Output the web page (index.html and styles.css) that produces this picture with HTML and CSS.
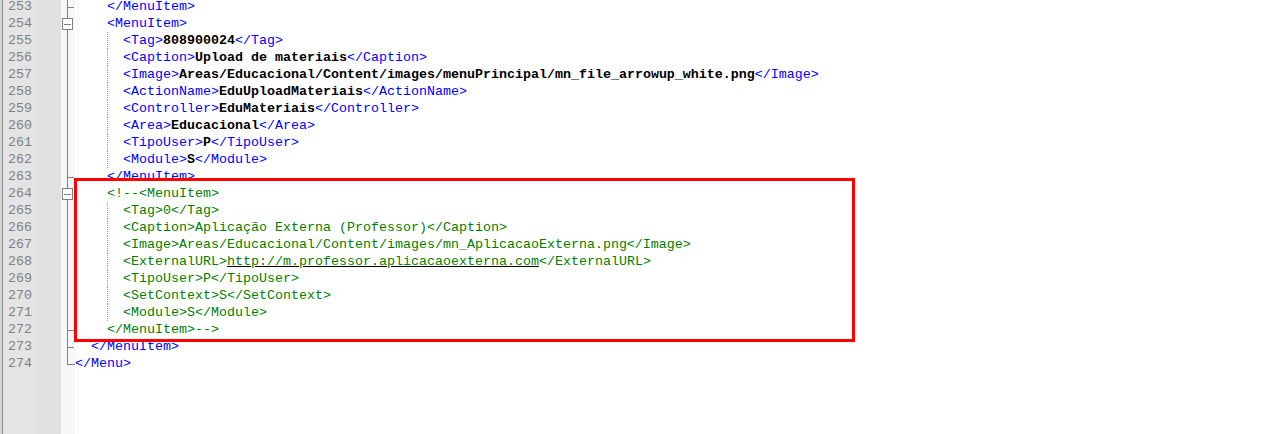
FILE: index.html
```html
<!DOCTYPE html>
<html>
<head>
<meta charset="utf-8">
<link rel="stylesheet" href="styles.css">
</head>
<body>
<div class="window">
  <div class="edge"></div>
  <div class="numbers">
    <div class="rows">
      <div class="n">253</div><div class="n">254</div><div class="n">255</div><div class="n">256</div>
      <div class="n">257</div><div class="n">258</div><div class="n">259</div><div class="n">260</div>
      <div class="n">261</div><div class="n">262</div><div class="n">263</div><div class="n">264</div>
      <div class="n">265</div><div class="n">266</div><div class="n">267</div><div class="n">268</div>
      <div class="n">269</div><div class="n">270</div><div class="n">271</div><div class="n">272</div>
      <div class="n">273</div><div class="n">274</div>
    </div>
  </div>
  <div class="symbols"></div>
  <div class="folds">
    <div class="rows">
      <svg class="f" viewBox="0 0 14 17"><line x1="6.5" y1="0" x2="6.5" y2="17"/><line x1="6.5" y1="9.5" x2="13" y2="9.5"/></svg>
      <svg class="f" viewBox="0 0 14 17"><line x1="6.5" y1="0" x2="6.5" y2="17"/><rect x="1.5" y="3.5" width="10" height="11"/><line x1="3" y1="9.5" x2="10" y2="9.5"/></svg>
      <svg class="f" viewBox="0 0 14 17"><line x1="6.5" y1="0" x2="6.5" y2="17"/></svg>
      <svg class="f" viewBox="0 0 14 17"><line x1="6.5" y1="0" x2="6.5" y2="17"/></svg>
      <svg class="f" viewBox="0 0 14 17"><line x1="6.5" y1="0" x2="6.5" y2="17"/></svg>
      <svg class="f" viewBox="0 0 14 17"><line x1="6.5" y1="0" x2="6.5" y2="17"/></svg>
      <svg class="f" viewBox="0 0 14 17"><line x1="6.5" y1="0" x2="6.5" y2="17"/></svg>
      <svg class="f" viewBox="0 0 14 17"><line x1="6.5" y1="0" x2="6.5" y2="17"/></svg>
      <svg class="f" viewBox="0 0 14 17"><line x1="6.5" y1="0" x2="6.5" y2="17"/></svg>
      <svg class="f" viewBox="0 0 14 17"><line x1="6.5" y1="0" x2="6.5" y2="17"/></svg>
      <svg class="f" viewBox="0 0 14 17"><line x1="6.5" y1="0" x2="6.5" y2="17"/><line x1="6.5" y1="9.5" x2="13" y2="9.5"/></svg>
      <svg class="f" viewBox="0 0 14 17"><line x1="6.5" y1="0" x2="6.5" y2="17"/><rect x="1.5" y="3.5" width="10" height="11"/><line x1="3" y1="9.5" x2="10" y2="9.5"/></svg>
      <svg class="f" viewBox="0 0 14 17"><line x1="6.5" y1="0" x2="6.5" y2="17"/></svg>
      <svg class="f" viewBox="0 0 14 17"><line x1="6.5" y1="0" x2="6.5" y2="17"/></svg>
      <svg class="f" viewBox="0 0 14 17"><line x1="6.5" y1="0" x2="6.5" y2="17"/></svg>
      <svg class="f" viewBox="0 0 14 17"><line x1="6.5" y1="0" x2="6.5" y2="17"/></svg>
      <svg class="f" viewBox="0 0 14 17"><line x1="6.5" y1="0" x2="6.5" y2="17"/></svg>
      <svg class="f" viewBox="0 0 14 17"><line x1="6.5" y1="0" x2="6.5" y2="17"/></svg>
      <svg class="f" viewBox="0 0 14 17"><line x1="6.5" y1="0" x2="6.5" y2="17"/></svg>
      <svg class="f" viewBox="0 0 14 17"><line x1="6.5" y1="0" x2="6.5" y2="17"/><line x1="6.5" y1="9.5" x2="13" y2="9.5"/></svg>
      <svg class="f" viewBox="0 0 14 17"><line x1="6.5" y1="0" x2="6.5" y2="17"/><line x1="6.5" y1="9.5" x2="13" y2="9.5"/></svg>
      <svg class="f" viewBox="0 0 14 17"><line x1="6.5" y1="0" x2="6.5" y2="10"/><line x1="6.5" y1="9.5" x2="14" y2="9.5"/></svg>
    </div>
  </div>
  <div class="code">
    <div class="rows">
<div class="ln"><span class="t">    &lt;/MenuItem&gt;</span></div>
<div class="ln"><span class="t">    &lt;MenuItem&gt;</span></div>
<div class="ln g"><span class="t">      &lt;Tag&gt;</span><b>808900024</b><span class="t">&lt;/Tag&gt;</span></div>
<div class="ln g"><span class="t">      &lt;Caption&gt;</span><b>Upload de materiais</b><span class="t">&lt;/Caption&gt;</span></div>
<div class="ln g"><span class="t">      &lt;Image&gt;</span><b>Areas/Educacional/Content/images/menuPrincipal/mn_file_arrowup_white.png</b><span class="t">&lt;/Image&gt;</span></div>
<div class="ln g"><span class="t">      &lt;ActionName&gt;</span><b>EduUploadMateriais</b><span class="t">&lt;/ActionName&gt;</span></div>
<div class="ln g"><span class="t">      &lt;Controller&gt;</span><b>EduMateriais</b><span class="t">&lt;/Controller&gt;</span></div>
<div class="ln g"><span class="t">      &lt;Area&gt;</span><b>Educacional</b><span class="t">&lt;/Area&gt;</span></div>
<div class="ln g"><span class="t">      &lt;TipoUser&gt;</span><b>P</b><span class="t">&lt;/TipoUser&gt;</span></div>
<div class="ln g"><span class="t">      &lt;Module&gt;</span><b>S</b><span class="t">&lt;/Module&gt;</span></div>
<div class="ln"><span class="t">    &lt;/MenuItem&gt;</span></div>
<div class="ln"><span class="c">    &lt;!--&lt;MenuItem&gt;</span></div>
<div class="ln g"><span class="c">      &lt;Tag&gt;0&lt;/Tag&gt;</span></div>
<div class="ln g"><span class="c">      &lt;Caption&gt;Aplicação Externa (Professor)&lt;/Caption&gt;</span></div>
<div class="ln g"><span class="c">      &lt;Image&gt;Areas/Educacional/Content/images/mn_AplicacaoExterna.png&lt;/Image&gt;</span></div>
<div class="ln g"><span class="c">      &lt;ExternalURL&gt;<span class="url">http://m.professor.aplicacaoexterna.com</span>&lt;/ExternalURL&gt;</span></div>
<div class="ln g"><span class="c">      &lt;TipoUser&gt;P&lt;/TipoUser&gt;</span></div>
<div class="ln g"><span class="c">      &lt;SetContext&gt;S&lt;/SetContext&gt;</span></div>
<div class="ln g"><span class="c">      &lt;Module&gt;S&lt;/Module&gt;</span></div>
<div class="ln"><span class="c">    &lt;/MenuItem&gt;--&gt;</span></div>
<div class="ln"><span class="t">  &lt;/MenuItem&gt;</span></div>
<div class="ln"><span class="t">&lt;/Menu&gt;</span></div>
    </div>
  </div>
  <div class="highlight"></div>
</div>
</body>
</html>
```

FILE: styles.css
```css
html, body {
  margin: 0;
  padding: 0;
  background: #ffffff;
}

.window {
  position: relative;
  display: flex;
  width: 1286px;
  height: 434px;
  overflow: hidden;
  font-family: "Liberation Mono", "Courier New", monospace;
  font-size: 13.33px;
  line-height: 17px;
}

.edge {
  flex: 0 0 2px;
  background: #d6d6d6;
  border-right: 1px solid #8c8c8c;
}

.rows {
  margin-top: -2px;
}

.numbers {
  flex: 0 0 33px;
  background: #e4e4e4;
}

.n {
  height: 17px;
  text-align: right;
  padding-right: 4px;
  color: #808080;
}

.symbols {
  flex: 0 0 25px;
  background: #e0e0e0;
}

.folds {
  flex: 0 0 14px;
  background: repeating-conic-gradient(#f0f0f0 0 25%, #ffffff 0 50%) 0 0 / 2px 2px;
}

.f {
  display: block;
  width: 14px;
  height: 17px;
  stroke: #808080;
  stroke-width: 1;
  shape-rendering: crispEdges;
}

.f rect {
  fill: #ffffff;
}

.code {
  flex: 1 1 auto;
  background: #ffffff;
}

.ln {
  height: 17px;
  white-space: pre;
}

.ln.g {
  background: linear-gradient(#9a9a9a 50%, transparent 50%) 32px 0 / 1px 2px repeat-y;
}

.t {
  color: #0000ff;
}

.ln b {
  color: #000000;
  font-weight: bold;
}

.c {
  color: #008000;
}

.url {
  text-decoration: underline;
  text-decoration-color: #000000;
}

.highlight {
  position: absolute;
  left: 74px;
  top: 178px;
  width: 781px;
  height: 164px;
  box-sizing: border-box;
  border: 3px solid #ff0000;
}
```
